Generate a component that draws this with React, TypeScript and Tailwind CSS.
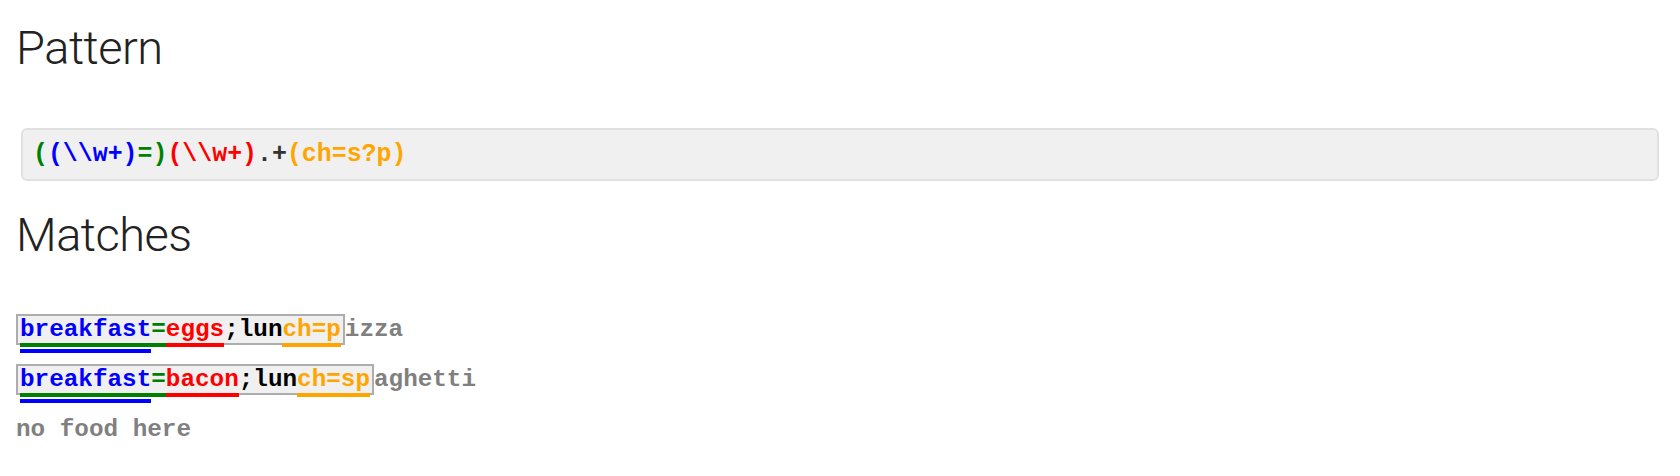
const mono = "font-['Courier_New','Liberation_Mono',monospace] font-bold";

function Heading({ children, className }: { children: React.ReactNode; className?: string }) {
  return (
    <h1 className={`font-['Roboto','Helvetica_Neue',sans-serif] font-light text-[47px] tracking-[-0.5px] leading-[52px] text-[#222] pl-[16px] ${className ?? ''}`}>
      {children}
    </h1>
  );
}

interface Match {
  first: string;
  value: string;
  lunch: string;
  rest: string;
}

const matches: Match[] = [
  { first: "breakfast", value: "eggs", lunch: "ch=p", rest: "izza" },
  { first: "breakfast", value: "bacon", lunch: "ch=sp", rest: "aghetti" },
];

export default function App() {
  return (
    <div className="min-h-screen bg-white pt-[22px]">
      <Heading>Pattern</Heading>

      {/* regex with colored groups */}
      <div className="mt-[54px] mx-[21px] h-[53px] bg-[#f0f0f0] border-2 border-[#e0e0e0] rounded-[6px] pl-[10px]">
        <span className={`${mono} text-[24.9px] leading-[49px] whitespace-pre`}>
          <span className="text-[#008000]">(</span>
          <span className="text-[#0000ff]">(\\w+)</span>
          <span className="text-[#008000]">=)</span>
          <span className="text-[#ff0000]">(\\w+)</span>
          <span className="text-[#333]">.+</span>
          <span className="text-[#ffa500]">(ch=s?p)</span>
        </span>
      </div>

      <Heading className="mt-[28px]">Matches</Heading>

      <div className={`${mono} text-[24.3px] leading-[50px] mt-[44px] pl-[16px] whitespace-pre`}>
        {matches.map((m, i) => (
          <div key={i} className="h-[50px]">
            <span className="border-2 border-[#adadad] bg-[#f0f0f0] px-[2px]">
              <span className="text-[#008000] border-b-4 border-[#008000]">
                <span className="text-[#0000ff] border-b-4 border-[#0000ff] pb-[6px]">{m.first}</span>=
              </span>
              <span className="text-[#ff0000] border-b-4 border-[#ff0000]">{m.value}</span>
              <span className="text-black">;lun</span>
              <span className="text-[#ffa500] border-b-4 border-[#ffa500]">{m.lunch}</span>
            </span>
            <span className="text-[#808080]">{m.rest}</span>
          </div>
        ))}
        <div className="h-[50px] text-[#808080]">no food here</div>
      </div>
    </div>
  );
}
